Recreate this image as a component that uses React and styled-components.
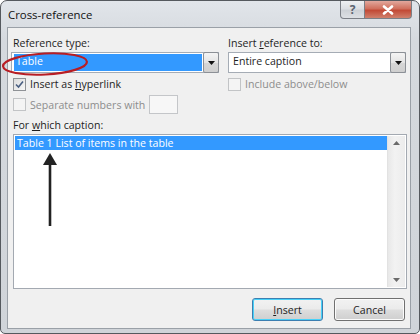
import styled, { createGlobalStyle, css } from "styled-components"

const GlobalStyle = createGlobalStyle`
  html, body {
    margin: 0;
    padding: 0;
    background: #ffffff;
  }
  body {
    font-family: "Open Sans", "Liberation Sans", sans-serif;
    font-size: 10.6px;
    color: #1e1e1e;
  }
`

const Window = styled.div`
  position: relative;
  width: 420px;
  height: 334px;
  box-sizing: border-box;
  border: 1px solid #55595e;
  border-radius: 7px 7px 5px 5px;
  background: linear-gradient(#e1e5ea, #d5d9de 40px, #d0d4d9);
  display: flex;
  flex-direction: column;
  overflow: hidden;
`

const TitleBar = styled.div`
  height: 26px;
  display: flex;
  align-items: flex-start;
  justify-content: space-between;
  padding-left: 7px;
`

const Title = styled.div`
  font-size: 11.4px;
  line-height: 14px;
  margin-top: 7px;
  color: #111;
`

const Caption = styled.div`
  display: flex;
  margin-right: 7px;
`

const CaptionBtn = styled.div`
  height: 18px;
  box-sizing: border-box;
  border: 1px solid #7b7f86;
  border-top: none;
  display: flex;
  align-items: center;
  justify-content: center;
  ${(p) =>
    p.close
      ? css`
          width: 47px;
          border-left: none;
          border-radius: 0 0 4px 0;
          background: linear-gradient(#e2a89d, #d0705d 45%, #c24a36 55%, #d0806c);
        `
      : css`
          width: 25px;
          border-radius: 0 0 0 4px;
          background: linear-gradient(#eef0f2, #dcdfe3 45%, #cdd1d6 55%, #dde0e4);
          color: #5b6470;
          font-size: 12px;
          font-weight: 700;
        `}
`

const Client = styled.div`
  flex: 1;
  margin: 0 8px 4px 6px;
  border: 1px solid #9aa0a7;
  background: #f0f0f0;
  display: flex;
  flex-direction: column;
  padding: 8px 0 0;
`

const TopRow = styled.div`
  display: flex;
  gap: 9px;
  padding-left: 3px;
`

const Column = styled.div`
  width: ${(p) => p.w}px;
  display: flex;
  flex-direction: column;
`

const Label = styled.div`
  height: 14px;
  line-height: 14px;
  padding-left: ${(p) => p.indent ?? 2}px;
  margin-bottom: 2px;
`

const Combo = styled.div`
  height: 21px;
  box-sizing: border-box;
  border: 1px solid #a5acb5;
  background: #fff;
  display: flex;
  align-items: stretch;
  padding: 1px 0 1px 2px;
`

const ComboText = styled.div`
  flex: 1;
  line-height: 15px;
  padding-left: 2px;
  margin-right: 1px;
  ${(p) =>
    p.selected &&
    css`
      background: #3399ff;
      color: #fff;
    `}
`

const DropBtn = styled.div`
  width: 16px;
  margin: -2px -1px -2px 0;
  box-sizing: border-box;
  border: 1px solid #8c9096;
  border-radius: 2px;
  background: linear-gradient(#f4f4f4, #e4e4e4 50%, #d6d6d6 51%, #cfcfcf);
  display: flex;
  align-items: center;
  justify-content: center;
`

const CheckRow = styled.div`
  display: flex;
  align-items: center;
  gap: 4px;
  height: ${(p) => p.h || 14}px;
  margin-top: 4px;
  padding-left: ${(p) => p.indent ?? 2}px;
  color: ${(p) => (p.disabled ? "#8d8d8d" : "#1e1e1e")};
`

const Box = styled.div`
  width: 13px;
  height: 13px;
  box-sizing: border-box;
  border: 1px solid ${(p) => (p.disabled ? "#c2c4c6" : "#8f9296")};
  background: ${(p) =>
    p.disabled ? "#f4f4f4" : "linear-gradient(135deg, #dcdcdc, #f7f7f7)"};
  display: flex;
  align-items: center;
  justify-content: center;
`

const SmallInput = styled.div`
  width: 29px;
  height: 19px;
  box-sizing: border-box;
  margin-left: 0;
  border: 1px solid #c4c6c9;
  background: #f7f7f7;
`

const Gap = styled.div`
  height: ${(p) => p.h}px;
`

const ListBox = styled.div`
  height: 155px;
  box-sizing: border-box;
  margin: 0 3px 0 5px;
  border: 1px solid #a3a9b1;
  background: #fff;
  display: flex;
  padding: 1px;
`

const Items = styled.div`
  flex: 1;
`

const Item = styled.div`
  height: 14px;
  line-height: 14px;
  padding-left: 2px;
  ${(p) =>
    p.selected &&
    css`
      background: #3399ff;
      color: #fff;
    `}
`

const ScrollBar = styled.div`
  width: 17px;
  background: linear-gradient(90deg, #e8e8e8, #f2f2f2 40%, #ececec);
  border-left: 1px solid #e2e2e2;
  display: flex;
  flex-direction: column;
  justify-content: space-between;
  align-items: center;
  padding: 5px 0;
`

const Buttons = styled.div`
  display: flex;
  justify-content: flex-end;
  gap: 11px;
  margin-top: 9px;
  padding-right: 5px;
`

const Button = styled.div`
  width: 71px;
  height: 23px;
  box-sizing: border-box;
  border: 1px solid ${(p) => (p.primary ? "#3c7fb1" : "#707070")};
  border-radius: 3px;
  background: linear-gradient(#f2f2f2, #ebebeb 48%, #dddddd 52%, #cfcfcf);
  box-shadow: ${(p) =>
    p.primary ? "inset 0 0 0 1px #48d1f8" : "inset 0 0 0 1px #fbfbfb"};
  display: flex;
  align-items: center;
  justify-content: center;
`

const U = styled.span`
  text-decoration: underline;
  text-underline-offset: 1px;
`

const Overlay = styled.svg`
  position: absolute;
  left: 0;
  top: 0;
  pointer-events: none;
`

const Triangle = ({ up, color = "#111" }) => (
  <svg width="7" height="4" viewBox="0 0 7 4">
    <path d={up ? "M0 4 L3.5 0 L7 4 Z" : "M0 0 L7 0 L3.5 4 Z"} fill={color} />
  </svg>
)

const Check = () => (
  <svg width="9" height="9" viewBox="0 0 9 9">
    <path d="M1 4.5 L3.5 7 L8 1.5" fill="none" stroke="#4a5f82" strokeWidth="1.6" />
  </svg>
)

export default function App() {
  return (
    <>
      <GlobalStyle />
      <Window>
        <TitleBar>
          <Title>Cross-reference</Title>
          <Caption>
            <CaptionBtn>?</CaptionBtn>
            <CaptionBtn close>
              <svg width="12" height="10" viewBox="0 0 12 10">
                <path d="M2 1.5 L10 8.5 M10 1.5 L2 8.5" stroke="#fff" strokeWidth="2.6" strokeLinecap="round" />
              </svg>
            </CaptionBtn>
          </Caption>
        </TitleBar>
        <Client>
          <TopRow>
            <Column w={208}>
              <Label>Reference type:</Label>
              <Combo>
                <ComboText selected>Table</ComboText>
                <DropBtn>
                  <Triangle />
                </DropBtn>
              </Combo>
              <CheckRow>
                <Box>
                  <Check />
                </Box>
                <span>
                  Insert as <U>h</U>yperlink
                </span>
              </CheckRow>
              <CheckRow h={19} disabled>
                <Box disabled />
                <span>Separate numbers with</span>
                <SmallInput />
              </CheckRow>
            </Column>
            <Column w={178}>
              <Label indent={0}>
                Insert <U>r</U>eference to:
              </Label>
              <Combo>
                <ComboText>Entire caption</ComboText>
                <DropBtn>
                  <Triangle />
                </DropBtn>
              </Combo>
              <CheckRow indent={0} disabled>
                <Box disabled />
                <span>Include above/below</span>
              </CheckRow>
            </Column>
          </TopRow>
          <Gap h={4} />
          <Label indent={5}>
            For <U>w</U>hich caption:
          </Label>
          <ListBox>
            <Items>
              <Item selected>Table 1 List of items in the table</Item>
            </Items>
            <ScrollBar>
              <Triangle up color="#6a6a6a" />
              <Triangle color="#6a6a6a" />
            </ScrollBar>
          </ListBox>
          <Buttons>
            <Button primary>
              <span>
                <U>I</U>nsert
              </span>
            </Button>
            <Button>Cancel</Button>
          </Buttons>
        </Client>
        <Overlay width="420" height="334" viewBox="0 0 420 334">
          <ellipse cx="44" cy="63" rx="42" ry="10.5" transform="rotate(-3 44 63)" fill="none" stroke="#b81d24" strokeWidth="2.2" />
          <line x1="49" y1="162" x2="49" y2="225" stroke="#222" strokeWidth="2.6" />
          <path d="M49 152 L56 164 L42 164 Z" fill="#222" />
        </Overlay>
      </Window>
    </>
  )
}
